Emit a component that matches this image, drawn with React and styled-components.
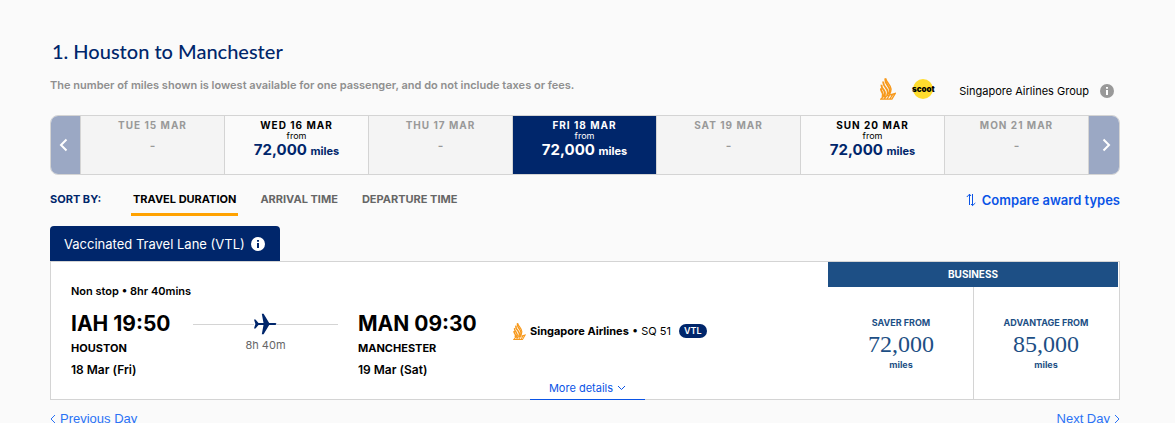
import React from 'react';
import styled, { createGlobalStyle, css } from 'styled-components';

const navy = '#00266b';
const blue = '#0a54e6';
const steel = '#1d4f85';
const line = '#d4d4d4';

const GlobalStyle = createGlobalStyle`
  *, *::before, *::after { box-sizing: border-box; }
  body {
    margin: 0;
    background: #fafafa;
    color: #000;
    font-family: Inter, "Liberation Sans", sans-serif;
    font-size: 12px;
  }
  button { font: inherit; border: 0; padding: 0; background: none; cursor: pointer; }
  a { text-decoration: none; }
  svg { display: block; flex: none; }
  h1, h2, p { margin: 0; }
`;

const Page = styled.main`
  padding: 37px 55px 0 50px;
  white-space: nowrap;
`;

const Title = styled.h1`
  padding-left: 2px;
  color: ${navy};
  font-family: Lato, "Liberation Sans", sans-serif;
  font-size: 20px;
  font-weight: 500;
  line-height: 28px;
`;

const IntroRow = styled.div`
  display: flex;
  justify-content: space-between;
  height: 50px;
  padding-top: 11px;
`;

const Note = styled.p`
  color: #8f8f8f;
  font-size: 11px;
  font-weight: 600;
  line-height: 18px;
`;

const Carriers = styled.div`
  display: flex;
  align-items: center;
  height: 30px;
  padding-right: 6px;
`;

const ScootLogo = styled.span`
  display: flex;
  align-items: center;
  justify-content: center;
  width: 20px;
  height: 20px;
  margin: 0 26px 4px 17px;
  border-radius: 50%;
  background: #ffdc2e;
  font-size: 8px;
  font-weight: 900;
`;

const CarrierName = styled.span`
  margin-right: 11px;
  font-size: 11px;
`;

const BirdSlot = styled.span`
  padding-bottom: 4px;
`;

const DateStrip = styled.div`
  display: grid;
  grid-template-columns: 29px repeat(7, 1fr) 31px;
  height: 60px;
  border: 1px solid ${line};
  border-radius: 8px;
  overflow: hidden;
`;

const StripArrow = styled.button`
  display: flex;
  align-items: center;
  justify-content: center;
  background: #9ba8c4;
  color: #fff;
  ${p => (p.$later
    ? css`padding-left: 4px; border-left: 1px solid ${line};`
    : css`padding-right: 4px;`)}
`;

const DateCell = styled.button`
  display: flex;
  flex-direction: column;
  align-items: center;
  padding-top: 2px;
  border-left: 1px solid ${line};
  background: #fafafa;
  color: #000;
  ${p => p.$empty && css`background: #f4f4f4; color: #999;`}
  ${p => p.$selected && css`background: ${navy}; color: #fff;`}
`;

const DateLabel = styled.span`
  font-size: 10px;
  font-weight: 700;
  letter-spacing: 1px;
  line-height: 14px;
`;

const DateFrom = styled.span`
  font-size: 9px;
  line-height: 8px;
`;

const DateMiles = styled.strong`
  color: ${p => (p.$selected ? '#fff' : navy)};
  font-size: 15px;
  line-height: 20px;
`;

const MilesUnit = styled.span`
  font-size: 11px;
`;

const NoFare = styled.span`
  font-size: 12px;
  font-weight: 600;
  line-height: 28px;
`;

const SortRow = styled.div`
  display: flex;
  align-items: flex-start;
  height: 51px;
  padding-top: 14px;
`;

const SortLabel = styled.span`
  width: 81px;
  color: ${navy};
  font-weight: 700;
  font-size: 11px;
  line-height: 20px;
`;

const SortTab = styled.button`
  height: 27px;
  margin-right: 20px;
  padding: 0 2px 4px;
  border-bottom: 3px solid ${p => (p.$active ? '#ffa200' : 'transparent')};
  color: ${p => (p.$active ? '#000' : '#666')};
  font-size: 11px;
  font-weight: 700;
  line-height: 20px;
`;

const CompareButton = styled.button`
  display: flex;
  align-items: center;
  gap: 6px;
  margin-left: auto;
  color: ${blue};
  font-size: 13px;
  font-weight: 600;
  line-height: 22px;
`;

const LaneTab = styled.div`
  display: flex;
  align-items: center;
  justify-content: space-between;
  width: 230px;
  height: 35px;
  padding: 0 15px 0 14px;
  border-radius: 4px 4px 0 0;
  background: ${navy};
  color: #fff;
  font-size: 13px;
`;

const FlightCard = styled.article`
  display: flex;
  height: 139px;
  padding-right: 1px;
  border: 1px solid ${line};
  background: #fff;
`;

const Itinerary = styled.div`
  display: grid;
  flex: 1;
  grid-template-columns: 122px 165px 155px 1fr;
  padding-left: 20px;
`;

const Stop = styled.div`
  padding-top: ${p => (p.$first ? 21 : 49)}px;
  font-weight: 700;
`;

const StopsInfo = styled.p`
  margin-bottom: 12px;
  font-size: 11px;
  font-weight: 600;
  line-height: 16px;
`;

const StopTime = styled.h2`
  font-size: 21px;
  font-weight: 700;
  line-height: 26px;
`;

const StopCity = styled.p`
  font-size: 11px;
  line-height: 22px;
`;

const StopDate = styled.p`
  font-size: 12px;
  font-weight: 600;
  line-height: 22px;
`;

const Leg = styled.div`
  display: flex;
  flex-direction: column;
  align-items: center;
  width: 145px;
  padding-top: 51px;
  color: #666;
  font-size: 11px;
  line-height: 20px;
`;

const LegLine = styled.div`
  display: flex;
  align-items: center;
  width: 100%;
  &::before, &::after { content: ''; flex: 1; height: 1px; background: ${line}; }
`;

const CarrierColumn = styled.div`
  display: flex;
  flex-direction: column;
  justify-content: space-between;
  padding-top: 59px;
`;

const CarrierLine = styled.div`
  display: flex;
  align-items: center;
  gap: 4px;
  height: 20px;
  font-size: 11px;
`;

const LaneBadge = styled.span`
  margin-left: 4px;
  padding: 0 5px;
  border-radius: 7px;
  background: ${navy};
  color: #fff;
  font-size: 9px;
  font-weight: 600;
  line-height: 14px;
`;

const MoreDetails = styled.button`
  display: flex;
  align-items: center;
  justify-content: center;
  gap: 4px;
  width: 115px;
  height: 24px;
  margin: 0 0 -1px 17px;
  border-bottom: 1px solid ${blue};
  color: ${blue};
  font-size: 11px;
`;

const Fares = styled.div`
  display: grid;
  grid-template-columns: 1fr 1fr;
  grid-template-rows: 25px 1fr;
  width: 290px;
`;

const CabinName = styled.div`
  grid-column: 1 / -1;
  background: ${steel};
  color: #fff;
  font-size: 10px;
  font-weight: 700;
  line-height: 25px;
  text-align: center;
`;

const Fare = styled.button`
  display: flex;
  flex-direction: column;
  align-items: center;
  padding-top: 28px;
  border-left: 1px solid ${p => (p.$divided ? line : 'transparent')};
  color: ${steel};
  font-size: 9px;
  font-weight: 700;
  line-height: 16px;
`;

const FareMiles = styled.span`
  font-family: "Liberation Serif", serif;
  font-size: 24px;
  font-weight: 400;
  line-height: 26px;
`;

const DayNav = styled.nav`
  display: flex;
  justify-content: space-between;
  padding-top: 8px;
`;

const DayLink = styled.a`
  display: flex;
  align-items: center;
  gap: 4px;
  color: #2a72f5;
  font-family: "Liberation Sans", sans-serif;
  font-size: 13px;
  line-height: 22px;
`;

const Chevron = ({ w, h, d, stroke = 2 }) => (
  <svg width={w} height={h} viewBox={`0 0 ${w} ${h}`} fill="none" stroke="currentColor" strokeWidth={stroke} aria-hidden="true">
    <path d={d} />
  </svg>
);

const InfoIcon = ({ bg, fg }) => (
  <svg width="14" height="14" viewBox="0 0 14 14" role="img" aria-label="Information">
    <circle cx="7" cy="7" r="7" fill={bg} />
    <path d="M6 3h2v1.8H6zM6 6h2v5H6z" fill={fg} />
  </svg>
);

const BirdLogo = ({ w, h }) => (
  <svg width={w} height={h} viewBox="0 0 16 22" fill="none" stroke="#f7991c" aria-hidden="true">
    <path
      d="M5.500.4C4.600 3.500 6.200 5.600 8 8c2.200 2.900 2.800 5.400 1 8.500M3.400 3.400c-.8 3 .9 4.800 2.800 7 1.900 2.300 2.300 4 .8 6.800M1.600 6.700c-.6 2.600 1 4 2.300 5.600 1.500 1.900 1.600 3.400.3 5.900M.9 10.300c-.2 1.900.6 3 1.400 4.200.8 1.400.7 2.700 0 4.300"
      strokeWidth="1.900"
    />
    <path d="M5.500.4C6.500 4.200 10.800 7 11 11c.1 2.200-.8 4-2 5.500" strokeWidth="1.500" />
    <path d="M.8 21.200 3 18.800l12.300-3.400-3.400 5.800zM4 21l2.500-3M7 21l2.600-3.800M9.800 21l3-4.600" strokeWidth="1.300" />
  </svg>
);

const Plane = () => (
  <svg width="23" height="22" viewBox="0 0 23 22" fill={navy} aria-hidden="true">
    <path d="M0 6.500h1.500L4.500 10h5L7.800.8h1.800L15.200 10h5.300c1.200 0 2 .5 2 1s-.8 1-2 1h-5.300l-5.600 9.200H7.800L9.500 12h-5l-3 3.500H0L1.400 11z" />
  </svg>
);

const SortArrows = () => (
  <svg width="10" height="14" viewBox="0 0 10 14" fill="none" stroke="currentColor" aria-hidden="true">
    <path d="M3.500 12V1.200M.8 4 3.500 1.200 5 3M6.500 1v11.500M5 11l1.500 1.600L9.300 10" />
  </svg>
);

const dates = [
  { label: 'TUE 15 MAR' },
  { label: 'WED 16 MAR', miles: '72,000' },
  { label: 'THU 17 MAR' },
  { label: 'FRI 18 MAR', miles: '72,000', selected: true },
  { label: 'SAT 19 MAR' },
  { label: 'SUN 20 MAR', miles: '72,000' },
  { label: 'MON 21 MAR' },
];

const fares = [
  { name: 'SAVER FROM', miles: '72,000' },
  { name: 'ADVANTAGE FROM', miles: '85,000' },
];

export default function App() {
  return (
    <>
      <GlobalStyle />
      <Page>
        <Title>1. Houston to Manchester</Title>
        <IntroRow>
          <Note>The number of miles shown is lowest available for one passenger, and do not include taxes or fees.</Note>
          <Carriers>
            <BirdSlot>
              <BirdLogo w={16} h={22} />
            </BirdSlot>
            <ScootLogo>scoot</ScootLogo>
            <CarrierName>Singapore Airlines Group</CarrierName>
            <InfoIcon bg="#999" fg="#fff" />
          </Carriers>
        </IntroRow>

        <DateStrip>
          <StripArrow aria-label="Earlier dates">
            <Chevron w={9} h={14} d="M7.500 1.500 2 7l5.500 5.500" />
          </StripArrow>
          {dates.map(d => (
            <DateCell key={d.label} $empty={!d.miles} $selected={d.selected}>
              <DateLabel>{d.label}</DateLabel>
              {d.miles ? (
                <>
                  <DateFrom>from</DateFrom>
                  <DateMiles $selected={d.selected}>
                    {d.miles} <MilesUnit>miles</MilesUnit>
                  </DateMiles>
                </>
              ) : (
                <NoFare>-</NoFare>
              )}
            </DateCell>
          ))}
          <StripArrow $later aria-label="Later dates">
            <Chevron w={9} h={14} d="M1.500 1.500 7 7l-5.500 5.500" />
          </StripArrow>
        </DateStrip>

        <SortRow>
          <SortLabel>SORT BY:</SortLabel>
          <SortTab $active>TRAVEL DURATION</SortTab>
          <SortTab>ARRIVAL TIME</SortTab>
          <SortTab>DEPARTURE TIME</SortTab>
          <CompareButton>
            <SortArrows />
            Compare award types
          </CompareButton>
        </SortRow>

        <LaneTab>
          Vaccinated Travel Lane (VTL)
          <InfoIcon bg="#fff" fg={navy} />
        </LaneTab>
        <FlightCard>
          <Itinerary>
            <Stop $first>
              <StopsInfo>Non stop • 8hr 40mins</StopsInfo>
              <StopTime>IAH 19:50</StopTime>
              <StopCity>HOUSTON</StopCity>
              <StopDate>18 Mar (Fri)</StopDate>
            </Stop>
            <Leg>
              <LegLine>
                <Plane />
              </LegLine>
              8h 40m
            </Leg>
            <Stop>
              <StopTime>MAN 09:30</StopTime>
              <StopCity>MANCHESTER</StopCity>
              <StopDate>19 Mar (Sat)</StopDate>
            </Stop>
            <CarrierColumn>
              <CarrierLine>
                <BirdLogo w={13} h={17} />
                <span>
                  <b>Singapore Airlines</b> • SQ 51
                </span>
                <LaneBadge>VTL</LaneBadge>
              </CarrierLine>
              <MoreDetails>
                More details
                <Chevron w={9} h={6} d="M1 1l3.500 3.500L8 1" stroke={1} />
              </MoreDetails>
            </CarrierColumn>
          </Itinerary>
          <Fares>
            <CabinName>BUSINESS</CabinName>
            {fares.map((f, i) => (
              <Fare key={f.name} $divided={i > 0}>
                {f.name}
                <FareMiles>{f.miles}</FareMiles>
                miles
              </Fare>
            ))}
          </Fares>
        </FlightCard>

        <DayNav>
          <DayLink href="#previous">
            <Chevron w={6} h={10} d="M5 1 1 5l4 4" stroke={1} />
            Previous Day
          </DayLink>
          <DayLink href="#next">
            Next Day
            <Chevron w={6} h={10} d="M1 1l4 4-4 4" stroke={1} />
          </DayLink>
        </DayNav>
      </Page>
    </>
  );
}
